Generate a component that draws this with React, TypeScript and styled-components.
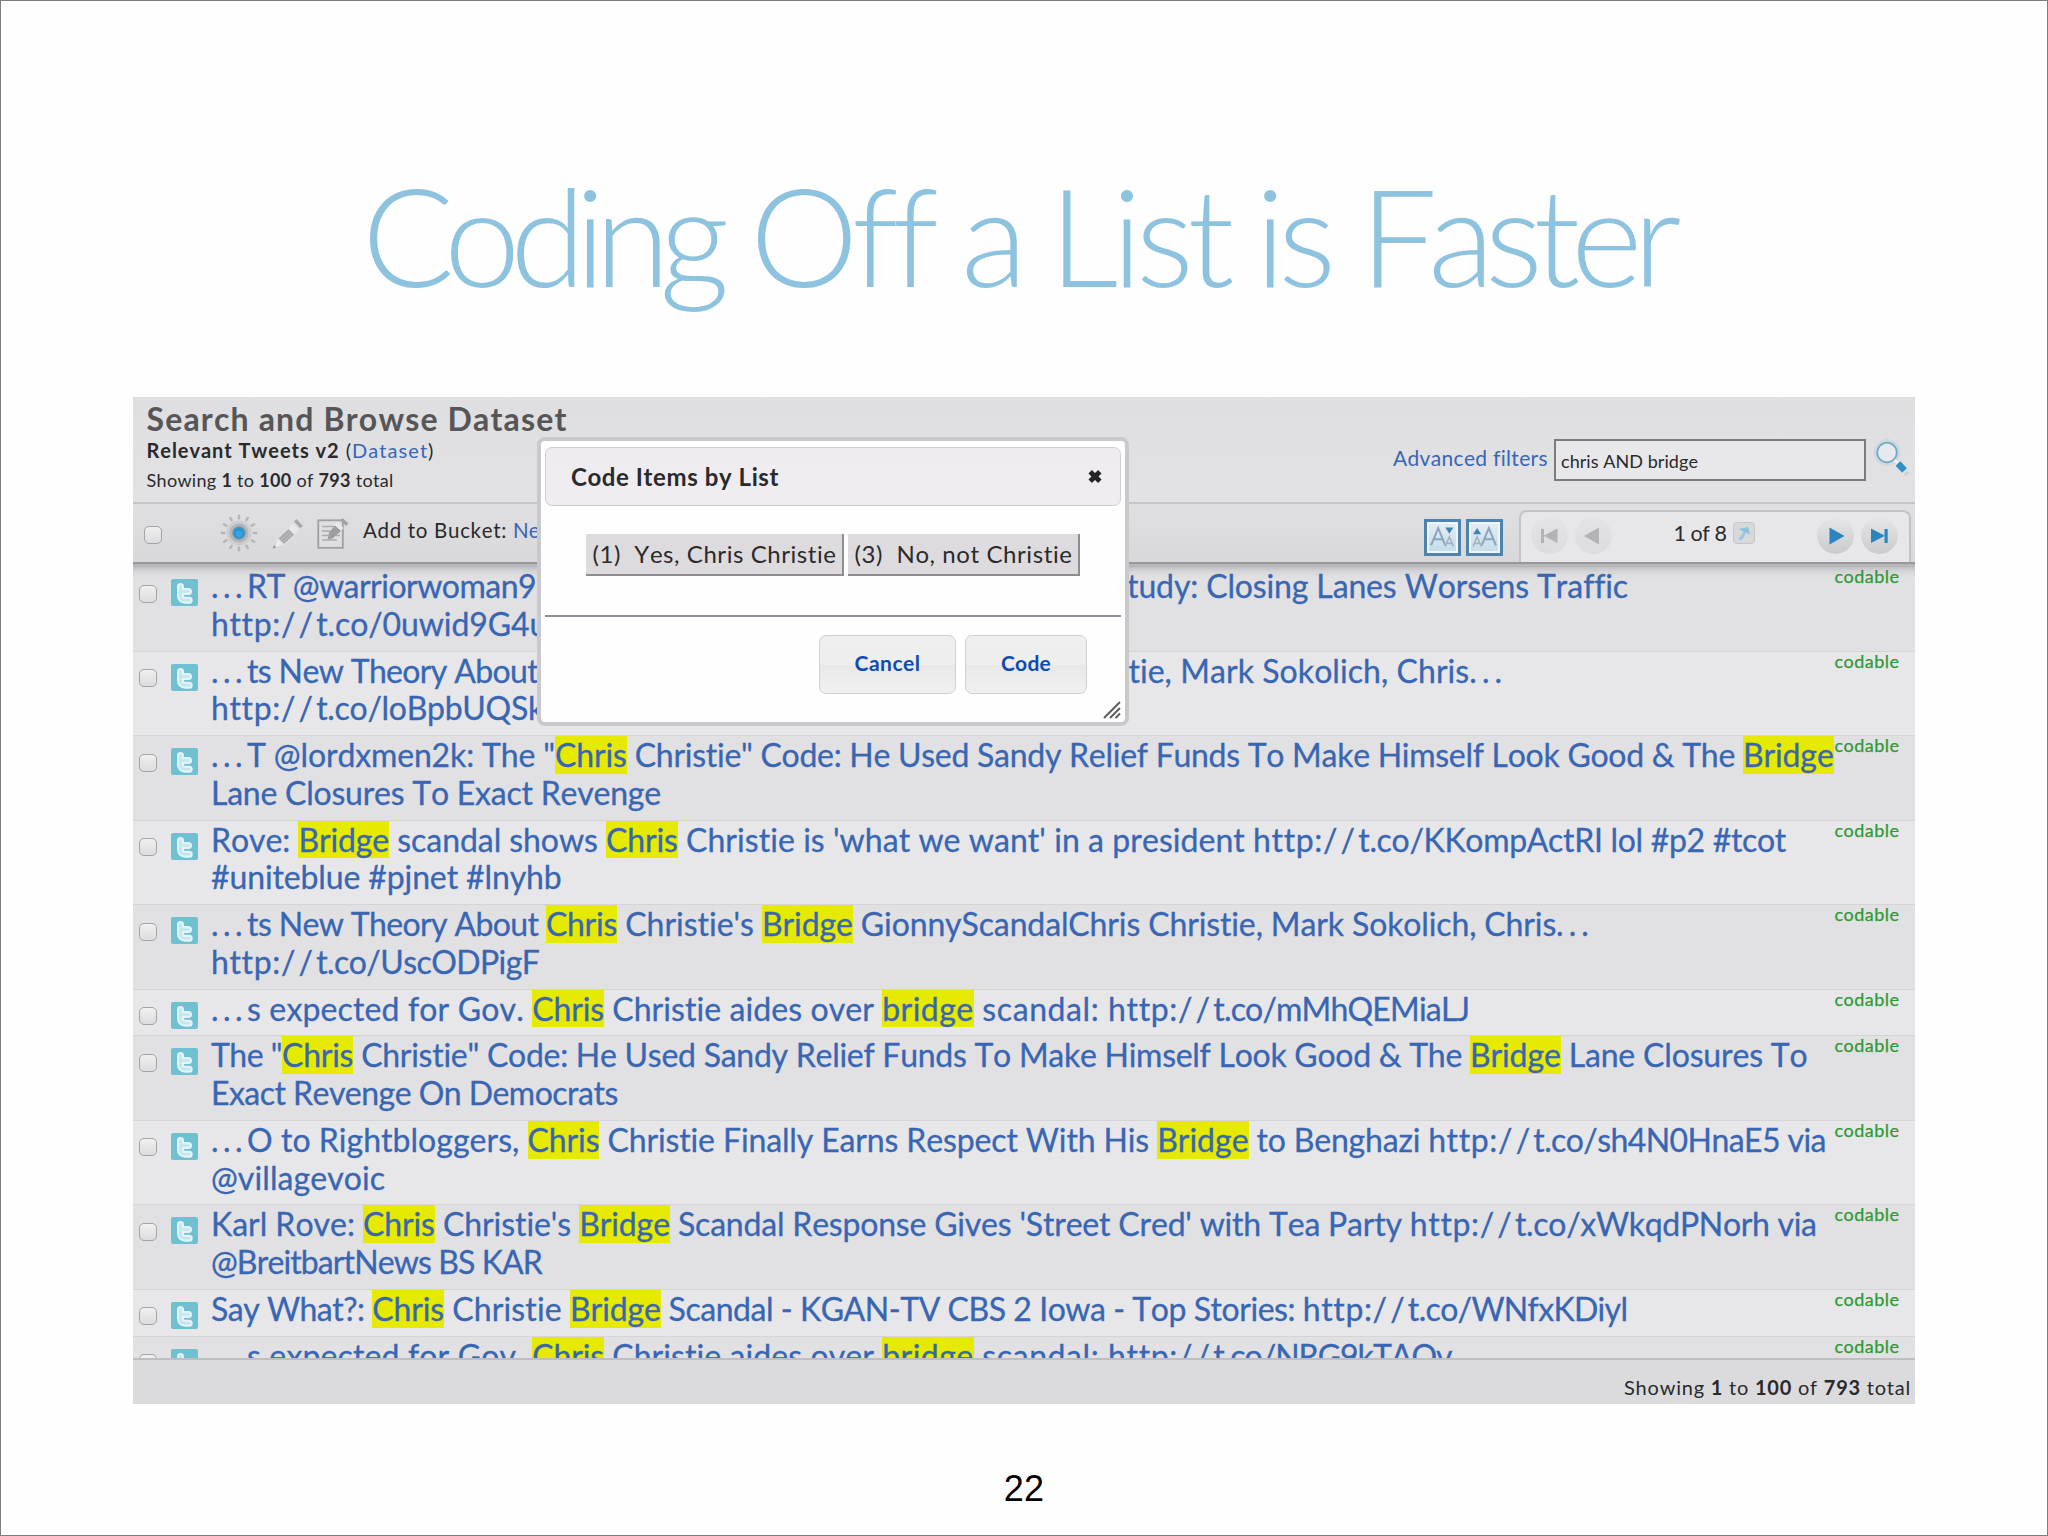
import React, { useLayoutEffect, useRef, useState } from "react";
import styled, { createGlobalStyle, css } from "styled-components";

const GlobalStyle = createGlobalStyle`
  html, body { margin: 0; padding: 0; background: #fff; }
  * { box-sizing: border-box; }
`;

const sans = `Lato, "Open Sans", "Liberation Sans", sans-serif`;
const link = "#3866b3";

/* ---------- text fitted to a measure by tracking ---------- */

const FitBox = styled.span<{ $w: number; $mark?: boolean }>`
  display: inline-block;
  vertical-align: top;
  width: ${(p) => p.$w}px;
  white-space: pre;
  background: ${(p) => (p.$mark ? "#e5ea00" : "transparent")};
`;

const FitInner = styled.span`
  display: inline-block;
  white-space: pre;
`;

function Fit({ w, mark, children }: { w: number; mark?: boolean; children: React.ReactNode }) {
  const ref = useRef<HTMLSpanElement>(null);
  const [spacing, setSpacing] = useState(0);
  useLayoutEffect(() => {
    const el = ref.current;
    if (!el) return;
    const count = (el.textContent || "").length;
    setSpacing((w - el.getBoundingClientRect().width) / count);
  }, [w]);
  return (
    <FitBox $w={w} $mark={mark}>
      <FitInner ref={ref} style={{ letterSpacing: `${spacing}px` }}>
        {children}
      </FitInner>
    </FitBox>
  );
}

/* ---------- slide ---------- */

const Slide = styled.main`
  width: 2048px;
  height: 1536px;
  background: #fefefe;
  border: 1px solid #7d7d7d;
  display: flex;
  flex-direction: column;
  align-items: flex-start;
  overflow: hidden;
  font-family: ${sans};
  font-kerning: none;
  font-variant-ligatures: none;
  color: #2a2a2c;
`;

const Title = styled.h1`
  margin: 151px 0 0 361px;
  height: 245px;
  display: flex;
  font-size: 137px;
  line-height: 164px;
  font-weight: 300;
  color: #8ec3e0;
`;

const Word = styled.span<{ $gap: number }>`
  display: block;
  margin-right: ${(p) => p.$gap}px;
`;

const PageNumber = styled.footer`
  align-self: center;
  margin-top: 67px;
  font-family: "Liberation Sans", sans-serif;
  font-size: 36px;
  line-height: 36px;
  letter-spacing: 0.2px;
  color: #000;
`;

/* ---------- browser panel ---------- */

const Panel = styled.section`
  position: relative;
  margin-left: 132px;
  width: 1782px;
  height: 1007px;
  background: #e2e1e3;
  display: flex;
  flex-direction: column;
`;

const Header = styled.header`
  height: 107px;
  flex: none;
  display: flex;
  justify-content: space-between;
  border-bottom: 2px solid #c6c5c8;
  background: linear-gradient(#dfdee1, #e2e1e3);
`;

const Heading = styled.div`
  padding: 1px 0 0 13.5px;
  display: flex;
  flex-direction: column;
`;

const PanelTitle = styled.h2`
  margin: 0;
  font-size: 32px;
  line-height: 42px;
  font-weight: 700;
  color: #565658;
`;

const SubTitle = styled.div`
  font-size: 20px;
  line-height: 20px;
  white-space: pre;
  b { font-weight: 700; }
`;

const Count = styled.div<{ $size: number; $lh: number }>`
  font-size: ${(p) => p.$size}px;
  line-height: ${(p) => p.$lh}px;
  white-space: pre;
  b { font-weight: 700; }
`;

const Link = styled.span`
  color: ${link};
`;

const Search = styled.div`
  display: flex;
  align-items: flex-start;
  padding-top: 42px;
  margin-right: 5px;
`;

const Filters = styled.div`
  color: ${link};
  font-size: 21px;
  line-height: 38px;
  margin-right: 6px;
`;

const Field = styled.div`
  width: 311.5px;
  height: 42px;
  border: 2px solid #7b7a7d;
  background: #e8e8ea;
  padding-left: 5px;
  font-size: 18px;
  line-height: 41px;
`;

const Lens = styled.svg`
  width: 42px;
  height: 42px;
  margin-left: 2.5px;
`;

const Toolbar = styled.div`
  height: 60px;
  flex: none;
  position: relative;
  z-index: 1;
  display: flex;
  align-items: flex-start;
  background: linear-gradient(#e0dfe2, #d8d7da);
  border-bottom: 2px solid #98979b;
`;

const Check = styled.span<{ $bar?: boolean }>`
  flex: none;
  width: 18px;
  height: 18px;
  border: 1.5px solid #a4a4a8;
  border-radius: 5px;
  background: linear-gradient(#f0f0f0, #dcdcde);
  ${(p) =>
    p.$bar
      ? css`margin: 22px 0 0 10.5px;`
      : css`margin: 17.5px 0 0 6px;`}
`;

const ToolIcon = styled.svg<{ $ml: number; $mt: number; $s: number }>`
  flex: none;
  width: ${(p) => p.$s}px;
  height: ${(p) => p.$s}px;
  margin: ${(p) => p.$mt}px 0 0 ${(p) => p.$ml}px;
`;

const Bucket = styled.div`
  margin-left: 14px;
  font-size: 20.5px;
  line-height: 52px;
  white-space: pre;
  flex: 1;
`;

const SizeButton = styled.span`
  width: 36.5px;
  height: 36.5px;
  margin: 15px 5.5px 0 0;
  border: 3.5px solid #4e83ae;
  background: linear-gradient(#e6ecf2, #c3dced);
  box-shadow: inset 0 0 0 2px #f0f5f8;
  display: flex;
  svg { width: 100%; height: 100%; }
`;

const Pager = styled.div`
  width: 392px;
  height: 52px;
  margin: 6px 4.5px 0 10.5px;
  border: 2px solid #c3c2c6;
  border-bottom: 0;
  border-radius: 8px 8px 0 0;
  background: #e7e6e9;
  display: flex;
  align-items: flex-start;
`;

const Round = styled.svg<{ $ml: number; $on?: boolean }>`
  width: 37px;
  height: 37px;
  flex: none;
  margin: 5px 0 0 ${(p) => p.$ml}px;
  border-radius: 50%;
  background: ${(p) => (p.$on ? "linear-gradient(#e6e5e8, #cbcacd)" : "linear-gradient(#e4e3e6, #dcdbde)")};
`;

const PageLabel = styled.div`
  margin-left: 62px;
  font-size: 21.5px;
  line-height: 42px;
`;

const Go = styled.svg`
  width: 22px;
  height: 22px;
  margin: 9.5px 0 0 6px;
  border: 1.5px solid #c6c6c9;
  border-radius: 4px;
  background: #d6d8db;
`;

/* ---------- list ---------- */

const List = styled.div`
  flex: 1;
  min-height: 0;
  padding-top: 2px;
  overflow: hidden;
  display: flex;
  flex-direction: column;
`;

const ListShade = styled.div`
  flex: none;
  height: 14px;
  margin-bottom: -14px;
  position: relative;
  background: linear-gradient(rgba(90, 90, 100, 0.34), rgba(90, 90, 100, 0.08) 55%, rgba(90, 90, 100, 0));
`;

const Row = styled.article<{ $alt: boolean }>`
  flex: none;
  display: flex;
  align-items: flex-start;
  padding-bottom: 8px;
  border-top: 1px solid #d5d4d7;
  background: ${(p) => (p.$alt ? "#e7e7e9" : "#e1e0e2")};
`;

const Bird = styled.svg`
  flex: none;
  width: 27px;
  height: 27px;
  margin: 12px 13px -4px 14px;
`;

const Lines = styled.div`
  width: 1623.5px;
  flex: none;
  color: ${link};
  font-size: 32px;
  line-height: 37.75px;
  -webkit-text-stroke: 0.3px ${link};
`;

const Line = styled.div`
  display: flex;
  height: 37.75px;
  white-space: pre;
`;

const Spacer = styled.span<{ $w: number }>`
  width: ${(p) => p.$w}px;
`;

const Codable = styled.div`
  color: #2f9a33;
  font-size: 18px;
  line-height: 19px;
  -webkit-text-stroke: 0.25px #2f9a33;
`;

const PanelFooter = styled.div`
  flex: none;
  height: 46px;
  border-top: 2px solid #bfbec1;
  background: #dbdadc;
  padding: 2px 4px 0 0;
  display: flex;
  justify-content: flex-end;
`;

/* ---------- dialog ---------- */

const Dialog = styled.div`
  position: absolute;
  z-index: 2;
  left: 404px;
  top: 40px;
  width: 591.5px;
  height: 289px;
  border: 4.5px solid #c9c8ca;
  border-radius: 8px;
  background: #fefefe;
  padding: 6px 4px 3px 4px;
  display: flex;
  flex-direction: column;
`;

const DialogBar = styled.div`
  height: 58.5px;
  flex: none;
  border: 1.5px solid #cfcdd1;
  border-radius: 7px;
  background: linear-gradient(#eeecef, #efedf1);
  padding: 0 16.5px 0 25px;
  display: flex;
  justify-content: space-between;
  font-size: 24px;
  line-height: 57px;
  font-weight: 700;
  svg { width: 16px; height: 15px; margin-top: 20.5px; }
`;

const Choices = styled.div`
  display: flex;
  gap: 4px;
  padding: 28px 0 0 40.5px;
  height: 112px;
  border-bottom: 2px solid #8e8c98;
`;

const Choice = styled.span`
  height: 42px;
  background: #dddbde;
  border: solid #8f8d92;
  border-width: 0 2px 2px 0;
  padding: 0 5px 0 7px;
  font-size: 24px;
  line-height: 39px;
  white-space: pre;
  color: #2b2a2c;
`;

const Actions = styled.div`
  display: flex;
  justify-content: flex-end;
  gap: 9px;
  padding: 18px 33.5px 0 0;
`;

const Action = styled.span<{ $w: number }>`
  width: ${(p) => p.$w}px;
  height: 59px;
  border: 1.5px solid #d0cfd2;
  border-radius: 7px;
  background: linear-gradient(#efefef 0%, #eeeeee 50%, #e8e8e8 51%, #f0f0f0 100%);
  display: flex;
  justify-content: center;
  font-size: 21px;
  line-height: 54px;
  font-weight: 700;
  color: #0d4bb0;
`;

const Grip = styled.svg`
  width: 18px;
  height: 18px;
  flex: none;
  align-self: flex-end;
  margin-top: 7px;
`;

/* ---------- data: text runs with their measures ---------- */

type Run = [string, number, 1?];
type Gap = number;
const S = 1.3061;
const LEFT = 161.6;

/* an address is tracked in three parts, so the slashes keep their open spacing */
const url = (from: number, rest: string, to: number): Run[] => [
  ["http:", from + 53.5],
  ["//", from + 80.5],
  [rest, to],
];
const dots: Run = ["...", 189.2];

/* each run carries the column at which it ends */
const rows: (Run | Gap)[][][] = [
  [
    [dots, ["RT @warriorwoman9", 410.5], 863, ["tudy: Closing Lanes Worsens Traffic", 1246.5]],
    url(LEFT, "t.co/0uwid9G4u", 419),
  ],
  [
    [dots, ["ts New Theory About", 412], 864, ["tie, Mark Sokolich, Chris", 1125], ["...", 1154]],
    url(LEFT, "t.co/loBpbUQSk", 416.5),
  ],
  [
    [dots, ["T @lordxmen2k: The \"", 425], ["Chris", 480, 1], [" Christie\" Code: He Used Sandy Relief Funds To Make Himself Look Good & The ", 1334.5], ["Bridge", 1404, 1]],
    [["Lane Closures To Exact Revenge", 506]],
  ],
  [
    [["Rove: ", 228.5], ["Bridge", 298, 1], [" scandal shows ", 464], ["Chris", 519, 1], [" Christie is 'what we want' in a president ", 959.5], ...url(959.5, "t.co/KKompActRI lol #p2 #tcot", 1367.5)],
    [["#uniteblue #pjnet #lnyhb", 430]],
  ],
  [
    [dots, ["ts New Theory About ", 418], ["Chris", 472.5, 1], [" Christie's ", 583.5], ["Bridge", 653, 1], [" GionnyScandalChris Christie, Mark Sokolich, Chris", 1191.5], ["...", 1220.5]],
    url(LEFT, "t.co/UscODPigF", 413),
  ],
  [
    [dots, ["s expected for Gov. ", 407.5], ["Chris", 462.5, 1], [" Christie aides over ", 675.5], ["bridge", 745.5, 1], [" scandal: ", 848.5], ...url(848.5, "t.co/mMhQEMiaLJ", 1125)],
  ],
  [
    [["The \"", 216], ["Chris", 270.5, 1], [" Christie\" Code: He Used Sandy Relief Funds To Make Himself Look Good & The ", 1125.5], ["Bridge", 1195, 1], [" Lane Closures To", 1384]],
    [["Exact Revenge On Democrats", 473]],
  ],
  [
    [dots, ["O to Rightbloggers, ", 404], ["Chris", 459, 1], [" Christie Finally Earns Respect With His ", 886], ["Bridge", 956, 1], [" to Benghazi ", 1093.5], ...url(1093.5, "t.co/sh4N0HnaE5 via", 1398)],
    [["@villagevoic", 295]],
  ],
  [
    [["Karl Rove: ", 278], ["Chris", 333, 1], [" Christie's ", 443.5], ["Bridge", 513, 1], [" Scandal Response Gives 'Street Cred' with Tea Party ", 1079.5], ...url(1079.5, "t.co/xWkqdPNorh via", 1391)],
    [["@BreitbartNews BS KAR", 415]],
  ],
  [
    [["Say What?: ", 285], ["Chris", 340, 1], [" Christie ", 436.5], ["Bridge", 506, 1], [" Scandal - KGAN-TV CBS 2 Iowa - Top Stories: ", 997.5], ...url(997.5, "t.co/WNfxKDiyl", 1246)],
  ],
  [
    [dots, ["s expected for Gov. ", 407.5], ["Chris", 462.5, 1], [" Christie aides over ", 675.5], ["bridge", 745.5, 1], [" scandal: ", 848.5], ...url(848.5, "t.co/NRG9kTAQv", 1111.5)],
  ],
];

function TextLine({ runs }: { runs: (Run | Gap)[] }) {
  let x = LEFT;
  return (
    <Line>
      {runs.map((r, i) => {
        const end = typeof r === "number" ? r : r[1];
        const w = (end - x) * S;
        x = end;
        return typeof r === "number" ? (
          <Spacer key={i} $w={w} />
        ) : (
          <Fit key={i} w={w} mark={!!r[2]}>{r[0]}</Fit>
        );
      })}
    </Line>
  );
}

const BirdIcon = () => (
  <Bird viewBox="0 0 27 27">
    <rect width="27" height="27" rx="2" fill="#6fc1d2" />
    <path
      d="M9.500 7.500v9.200c0 3 1.800 4.500 4.500 4.500h4.200M9.500 12.500h8"
      fill="none"
      stroke="#e3f4f8"
      strokeWidth="7"
      strokeLinecap="round"
      strokeLinejoin="round"
    />
    <path
      d="M9.500 7.500v9.200c0 3 1.800 4.500 4.500 4.500h4.200M9.500 12.500h8"
      fill="none"
      stroke="#c3e6ee"
      strokeWidth="2.600"
      strokeLinecap="round"
      strokeLinejoin="round"
    />
  </Bird>
);

const GearIcon = () => (
  <ToolIcon viewBox="-20 -20 40 40" $ml={57.5} $mt={9} $s={40}>
    {Array.from({ length: 12 }, (_, i) => (
      <rect key={i} x="-1.2" y="-18.500" width="2.400" height="5" rx="1" fill="#b6b6b9" transform={`rotate(${i * 30})`} />
    ))}
    <circle r="12.500" fill="#cdcdd0" />
    <circle r="9.500" fill="#b3b4b8" />
    <circle r="6.200" fill="#2b95d3" stroke="#7f929f" strokeWidth="1" />
    <circle r="3" cy="1" fill="#35a5e2" />
  </ToolIcon>
);

const PencilIcon = () => (
  <ToolIcon viewBox="0 0 32 32" $ml={12.5} $mt={14} $s={32}>
    <path d="M5 21.500L21 5.500l6 6L11.500 27.500z" fill="#e9e8eb" />
    <path d="M22 3.500L24.500 1l6.500 7-3 2z" fill="#a8a8ab" />
    <path d="M16.500 11l5.500 5.500L12 26l-5.500-5.500z" fill="#a9a9ac" />
    <path d="M18 13.500L9 22M20 15.500L11 24" stroke="#c3c3c6" strokeWidth="1" />
    <path d="M5 21.500l5 5.500-6.500 2.500z" fill="#ecebed" />
    <path d="M.5 30.500L2 27l2.500 2.500z" fill="#9c9c9f" />
  </ToolIcon>
);

const NoteIcon = () => (
  <ToolIcon viewBox="0 0 32 32" $ml={13.5} $mt={14} $s={32}>
    <rect x="1.300" y="2.300" width="24.500" height="27.500" fill="#dfdee1" stroke="#a0a0a3" strokeWidth="1.800" />
    <path d="M5 8.500h12M5 13h8M5 17.500h6M5 22h15M19 17.500h4" stroke="#acacaf" strokeWidth="1.700" />
    <path d="M20 4l6.500 6-3 3L17 7z" fill="#e9e8eb" />
    <path d="M18 7.500l6 5.500-8.500 7.500-5 1 1.500-7z" fill="#9d9da0" />
    <path d="M23.500 2.500L25.500 0l6 5.500-2.500 2.500z" fill="#a2a2a5" />
  </ToolIcon>
);

const Blue = "#2b86c0";

export default function App() {
  return (
    <>
      <GlobalStyle />
      <Slide>
        <Title>
          <Word $gap={31}><Fit w={357}>Coding</Fit></Word>
          <Word $gap={29}><Fit w={182}>Off</Fit></Word>
          <Word $gap={16}><Fit w={72}>a</Fit></Word>
          <Word $gap={27}><Fit w={179}>List</Fit></Word>
          <Word $gap={31}><Fit w={74}>is</Fit></Word>
          <Word $gap={0}><Fit w={312}>Faster</Fit></Word>
        </Title>
        <Panel>
          <Header>
            <Heading>
              <PanelTitle><Fit w={421}>Search and Browse Dataset</Fit></PanelTitle>
              <SubTitle>
                <b><Fit w={193}>Relevant Tweets v2</Fit></b>
                <Fit w={95}> (<Link>Dataset</Link>)</Fit>
              </SubTitle>
              <Count $size={18} $lh={41.5}>
                <Fit w={247}>Showing <b>1</b> to <b>100</b> of <b>793</b> total</Fit>
              </Count>
            </Heading>
            <Search>
              <Filters><Fit w={155}>Advanced filters</Fit></Filters>
              <Field><Fit w={137}>chris AND bridge</Fit></Field>
              <Lens viewBox="0 0 42 42">
                <circle cx="19" cy="13.500" r="12" fill="none" stroke="#cfd9de" strokeWidth="3" />
                <circle cx="19" cy="13.500" r="9.800" fill="#e6eaee" stroke="#72abc9" strokeWidth="1.800" />
                <path d="M26.500 21l3 3" stroke="#f2f3f5" strokeWidth="3" />
                <path d="M30 24.500l6.500 7" stroke="#2f8fc6" strokeWidth="6.500" />
                <path d="M37.500 33.500l2 2" stroke="#cdd0d3" strokeWidth="5" />
              </Lens>
            </Search>
          </Header>
          <Toolbar>
            <Check $bar />
            <GearIcon />
            <PencilIcon />
            <NoteIcon />
            <Bucket>
              <Fit w={150}>Add to Bucket: </Fit>
              <Link>Ne</Link>
            </Bucket>
            <SizeButton>
              <svg viewBox="0 0 30 30">
                <path d="M4 23L11 6l7 17M6.500 17h9" fill="none" stroke="#8ba6bc" strokeWidth="2" />
                <path d="M18 24l4-9.500 4 9.500M19.500 21h5" fill="none" stroke="#a3b4c1" strokeWidth="1.600" />
                <path d="M18 5.500h8l-4 6z" fill="#3f85b3" />
              </svg>
            </SizeButton>
            <SizeButton>
              <svg viewBox="0 0 30 30">
                <path d="M12.500 23l7-17 7 17M15 17h9" fill="none" stroke="#8ba6bc" strokeWidth="2" />
                <path d="M4 24l4-9.500 4 9.500M5.500 21h5" fill="none" stroke="#a3b4c1" strokeWidth="1.600" />
                <path d="M4 12h8l-4-6z" fill="#3f85b3" />
              </svg>
            </SizeButton>
            <Pager>
              <Round $ml={10} viewBox="0 0 37 37">
                <path d="M26.500 11.500v14.500l-14-7.200z" fill="#b3b2b6" />
                <rect x="10" y="12" width="3" height="14" fill="#b3b2b6" />
              </Round>
              <Round $ml={7} viewBox="0 0 37 37">
                <path d="M24 10.500v17L9 19z" fill="#b3b2b6" />
              </Round>
              <PageLabel><Fit w={53}>1 of 8</Fit></PageLabel>
              <Go viewBox="0 0 20 20">
                <path d="M5.500 16.500Q10 13 10.500 8" fill="none" stroke="#9cc7e0" strokeWidth="3" />
                <path d="M4.500 6L14 4l2 7.500z" fill="#8fc0de" />
              </Go>
              <Round $ml={62.500} $on viewBox="0 0 37 37">
                <path d="M12.500 10.500v17l15-8.500z" fill={Blue} />
              </Round>
              <Round $ml={6.500} $on viewBox="0 0 37 37">
                <path d="M10 11.500v14.500l14-7.200z" fill={Blue} />
                <rect x="23.500" y="12" width="3.200" height="14" fill={Blue} />
              </Round>
            </Pager>
          </Toolbar>
          <ListShade />
          <List>
            {rows.map((lines, i) => (
              <Row key={i} $alt={i % 2 === 1}>
                <Check />
                <BirdIcon />
                <Lines>
                  {lines.map((runs, j) => <TextLine key={j} runs={runs} />)}
                </Lines>
                <Codable><Fit w={65}>codable</Fit></Codable>
              </Row>
            ))}
          </List>
          <PanelFooter>
            <Count $size={20} $lh={50}>
              <Fit w={287}>Showing <b>1</b> to <b>100</b> of <b>793</b> total</Fit>
            </Count>
          </PanelFooter>
          <Dialog>
            <DialogBar>
              <Fit w={208}>Code Items by List</Fit>
              <svg viewBox="0 0 15 14">
                <path d="M3 2.500l9 9M12 2.500l-9 9" stroke="#242325" strokeWidth="4.600" />
              </svg>
            </DialogBar>
            <Choices>
              <Choice><Fit w={244}>(1)  Yes, Chris Christie</Fit></Choice>
              <Choice><Fit w={218}>(3)  No, not Christie</Fit></Choice>
            </Choices>
            <Actions>
              <Action $w={137}><Fit w={66}>Cancel</Fit></Action>
              <Action $w={122}><Fit w={50}>Code</Fit></Action>
            </Actions>
            <Grip viewBox="0 0 18 18">
              <path d="M1 17L17 1M7 17L17 7M12.500 17l4.500-4.500" stroke="#5b5a5d" strokeWidth="1.900" />
            </Grip>
          </Dialog>
        </Panel>
        <PageNumber>22</PageNumber>
      </Slide>
    </>
  );
}
